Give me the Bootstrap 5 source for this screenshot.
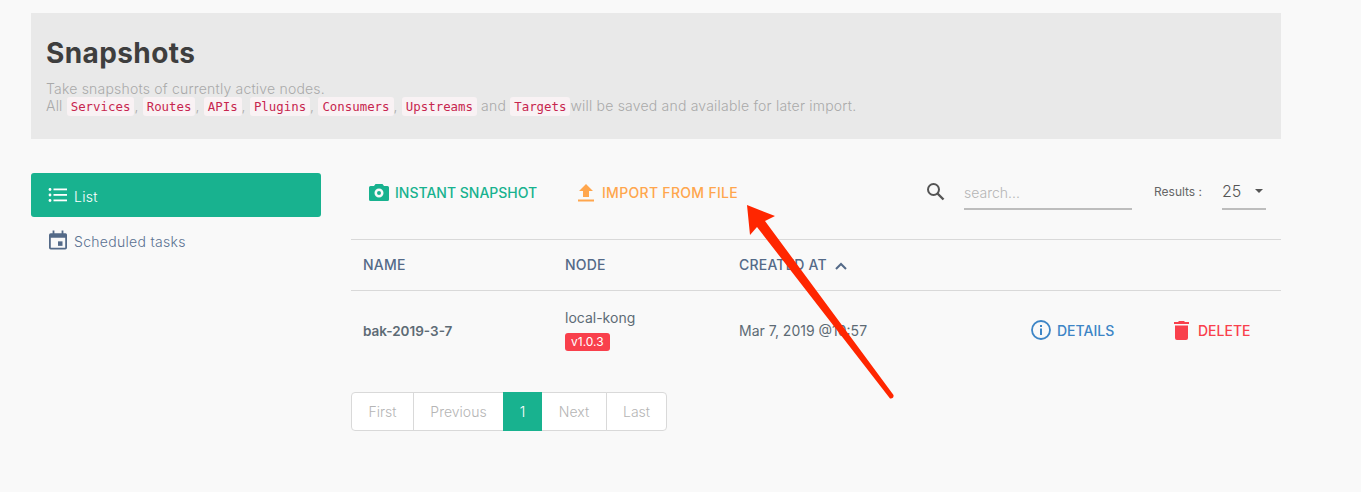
<!DOCTYPE html>
<html lang="en">
<head>
    <meta charset="UTF-8">
    <meta name="viewport" content="width=device-width, initial-scale=1, shrink-to-fit=no">
    <title>Snapshots</title>
    <link href="https://cdn.jsdelivr.net/npm/bootstrap@5.3.3/dist/css/bootstrap.min.css" rel="stylesheet">
    <style>
        html, body { height: 492px; overflow: hidden; }
        body { background: #f9f9f9; font-family: Inter, "Open Sans", sans-serif; font-size: 14px; color: #5a6a75; font-weight: 400; }
        .page-wrap { padding: 13px 80px 0 31px; position: relative; height: 492px; }
        .head-box { background: #e9e9e9; height: 126px; padding: 22px 15px 0; margin-bottom: 34px; }
        .head-box h1 { font-size: 28px; letter-spacing: .4px; line-height: 36px; font-weight: 700; color: #3e3e3e; margin: 0 0 9px; }
        .head-box p { font-size: 14px; letter-spacing: .2px; line-height: 17px; color: #a9a9a9; margin: 0; font-weight: 300; white-space: nowrap; }
        .head-box code { font-family: "DejaVu Sans Mono", monospace; font-size: 12.400px; letter-spacing: 0; color: #c7254e; background: #f9f2f4; border-radius: 3px; padding: 2px 4px; }
        .side-col { width: 290px; flex: none; margin-right: 30px; }
        .side-item { height: 44px; display: flex; align-items: center; gap: 6px; padding-left: 17px; border-radius: 3px; color: #5a7191; font-size: 14px; letter-spacing: .3px; font-weight: 300; margin-bottom: 1px; text-decoration: none; }
        .side-label { padding-top: 3px; }
        .side-cal { margin: 0 1px; }
        .side-item.is-on { background: #18b28f; color: #fff; }
        .tool-row { height: 67px; padding: 0 15px 27px 18px; border-bottom: 1px solid #d9d9d9; }
        .tool-btn { font-size: 14px; font-weight: 500; text-decoration: none; display: flex; align-items: center; gap: 6px; white-space: nowrap; }
        .tool-green { color: #18b28f; width: 209px; }
        .tool-orange { color: #ffa64d; letter-spacing: .3px; gap: 8px; }
        .search-ico { margin-bottom: 3px; }
        .search-field { width: 168px; border-bottom: 2px solid #bdbdbd; height: 35px; padding-top: 7px; color: #b5b5b5; font-size: 14px; font-weight: 300; margin-left: 19px; }
        .result-lbl { font-size: 12px; color: #666; margin-left: 22px; margin-bottom: 1px; width: 68px; white-space: nowrap; }
        .result-sel { width: 44px; border-bottom: 2px solid #bdbdbd; height: 35px; padding-top: 4px; font-size: 16px; font-weight: 300; color: #555; position: relative; }
        .result-sel::after { content: ""; position: absolute; right: 3px; top: 14px; border-left: 4px solid transparent; border-right: 4px solid transparent; border-top: 4px solid #555; }
        .snap-table { width: 930px; table-layout: fixed; margin: 0; --bs-table-bg: transparent; }
        .snap-table th { height: 50px; padding: 0 12px; vertical-align: middle; font-size: 14px; letter-spacing: .2px; font-weight: 500; color: #546a88; border-bottom: 1px solid #d9d9d9; }
        .snap-table td { height: 81px; padding: 0 12px; vertical-align: middle; font-size: 14px; color: #5d6b75; border-bottom: 0; }
        .snap-name { font-weight: 600; color: #3f4d57; font-size: 13.500px !important; }
        .ver-tag { display: inline-block; background: #f9404c; color: #fff; font-size: 12px; line-height: 18px; padding: 0 6px; border-radius: 3px; margin: 5px 0 4px; }
        .act-link { font-size: 14px; font-weight: 500; text-decoration: none; display: inline-flex; align-items: center; gap: 6px; vertical-align: middle; margin-bottom: 2px; }
        .act-blue { color: #3d85c6; }
        .act-red { color: #f9404c; gap: 8px; }
        .pager { margin: 21px 0 0; }
        .pager .page-link { height: 39px; padding: 0; display: flex; align-items: center; justify-content: center; font-size: 14px; font-weight: 300; color: #b5b5b5; border-color: #d9d9d9; background: #fff; }
        .pager .page-item:first-child .page-link { border-radius: 4px 0 0 4px; }
        .pager .page-item:last-child .page-link { border-radius: 0 4px 4px 0; }
        .pager .active .page-link { background: #18b28f; border-color: #18b28f; color: #fff; }
        .arrow-mark { position: absolute; left: 0; top: 0; pointer-events: none; }
    </style>
</head>
<body>
    <div class="page-wrap">
        <div class="head-box">
            <h1>Snapshots</h1>
            <p>Take snapshots of currently active nodes.<br>All <code>Services</code>, <code>Routes</code>, <code>APIs</code>, <code>Plugins</code>, <code>Consumers</code>, <code>Upstreams</code> and <code>Targets</code>will be saved and available for later import.</p>
        </div>
        <div class="d-flex">
            <div class="side-col">
                <a href="#" class="side-item is-on">
                    <svg width="20" height="16" viewBox="0 0 20 16" fill="#fff"><circle cx="2" cy="2.500" r="1.400"/><circle cx="2" cy="8" r="1.400"/><circle cx="2" cy="13.500" r="1.400"/><rect x="5.500" y="1.500" width="13.500" height="1.800"/><rect x="5.500" y="7" width="13.500" height="1.800"/><rect x="5.500" y="12.500" width="13.500" height="1.800"/></svg>
                    <span class="side-label">List</span>
                </a>
                <a href="#" class="side-item">
                    <svg class="side-cal" width="18" height="20" viewBox="0 0 20 21" fill="#546a88"><path d="M4 0h2v3h8V0h2v3h1.500A2 2 0 0 1 20 5v14a2 2 0 0 1-2 2H2a2 2 0 0 1-2-2V5a2 2 0 0 1 2-2h2zM2 8v11h16V8z"/><rect x="10" y="12" width="5" height="5"/></svg>
                    <span class="side-label">Scheduled tasks</span>
                </a>
            </div>
            <div class="flex-grow-1">
                <div class="tool-row d-flex align-items-center">
                    <a href="#" class="tool-btn tool-green">
                        <svg width="20" height="17" viewBox="0 0 20 17" fill="#18b28f"><path fill-rule="evenodd" d="M6.500 0h7l1.500 2h3.500A1.500 1.500 0 0 1 20 3.500v12a1.500 1.500 0 0 1-1.500 1.500h-17A1.500 1.500 0 0 1 0 15.500v-12A1.500 1.500 0 0 1 1.500 2H5zM10 4.500a4.500 4.500 0 1 0 0 9 4.500 4.500 0 0 0 0-9zm0 2.500a2 2 0 1 1 0 4 2 2 0 0 1 0-4z"/></svg>
                        INSTANT SNAPSHOT
                    </a>
                    <a href="#" class="tool-btn tool-orange">
                        <svg width="16" height="18" viewBox="0 0 16 18" fill="#ffa64d"><path d="M8 0L15 7h-4v6H5V7H1z"/><rect y="15.500" width="16" height="2"/></svg>
                        IMPORT FROM FILE
                    </a>
                    <svg class="ms-auto search-ico" width="19" height="19" viewBox="0 0 19 19" fill="none" stroke="#555" stroke-width="2"><circle cx="7.500" cy="7.500" r="5.500"/><path d="M11.500 11.500L17.500 17.500" stroke-width="2.400"/></svg>
                    <div class="search-field">search...</div>
                    <div class="result-lbl">Results :</div>
                    <div class="result-sel">25</div>
                </div>
                <table class="table snap-table">
                    <colgroup><col style="width:202px"><col style="width:174px"><col style="width:292px"><col style="width:142px"><col></colgroup>
                    <thead>
                        <tr>
                            <th>NAME</th>
                            <th>NODE</th>
                            <th>CREATED AT <svg class="ms-1" width="12" height="8" viewBox="0 0 12 8" fill="none" stroke="#546a88" stroke-width="2"><path d="M1 7l5-5 5 5"/></svg></th>
                            <th></th>
                            <th></th>
                        </tr>
                    </thead>
                    <tbody>
                        <tr>
                            <td class="snap-name">bak-2019-3-7</td>
                            <td>local-kong<br><span class="ver-tag">v1.0.3</span></td>
                            <td>Mar 7, 2019 @10:57</td>
                            <td><a href="#" class="act-link act-blue"><svg width="20" height="20" viewBox="0 0 20 20" fill="#3d85c6"><circle cx="10" cy="10" r="9" fill="none" stroke="#3d85c6" stroke-width="1.800"/><rect x="9" y="8.500" width="2" height="6.500"/><rect x="9" y="5" width="2" height="2"/></svg>DETAILS</a></td>
                            <td><a href="#" class="act-link act-red"><svg width="17" height="19" viewBox="0 0 15 19" fill="#f9404c"><path d="M5 0h5l1 1h4v2H0V1h4zM1 4.500h13V17a2 2 0 0 1-2 2H3a2 2 0 0 1-2-2z"/></svg>DELETE</a></td>
                        </tr>
                    </tbody>
                </table>
                <ul class="pagination pager">
                    <li class="page-item" style="width:63px"><a class="page-link" href="#">First</a></li>
                    <li class="page-item" style="width:90px"><a class="page-link" href="#">Previous</a></li>
                    <li class="page-item active" style="width:38px"><a class="page-link" href="#">1</a></li>
                    <li class="page-item" style="width:65px"><a class="page-link" href="#">Next</a></li>
                    <li class="page-item" style="width:60px"><a class="page-link" href="#">Last</a></li>
                </ul>
            </div>
        </div>
        <svg class="arrow-mark" width="1361" height="492" viewBox="0 0 1361 492"><path d="M747 205L775 216L765 221L893.500 395Q894 399 890 398.500L757 227L750 235Z" fill="#ff2600"/></svg>
    </div>
    <script src="https://cdn.jsdelivr.net/npm/bootstrap@5.3.3/dist/js/bootstrap.bundle.min.js"></script>
</body>
</html>
